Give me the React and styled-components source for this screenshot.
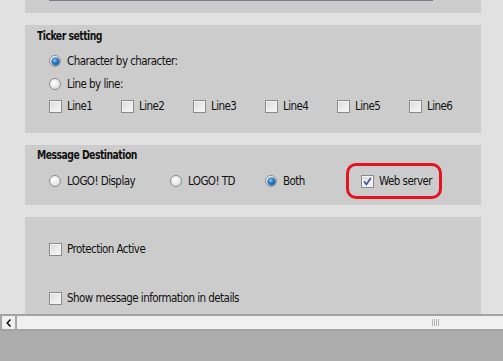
import React from 'react';
import styled, { createGlobalStyle } from 'styled-components';

const GlobalStyle = createGlobalStyle`
  html, body {
    margin: 0;
    padding: 0;
    background: #e1e1e1;
    overflow: hidden;
  }
  body {
    font-family: "Liberation Sans Narrow", "DejaVu Sans Condensed", "Liberation Sans", sans-serif;
    font-size: 11.5px;
    letter-spacing: -0.55px;
    color: #111;
  }
`;

const Page = styled.div`
  width: 503px;
  height: 361px;
  display: flex;
  flex-direction: column;
  background: #adadad;
`;

const Content = styled.div`
  height: 314px;
  background: #e1e1e1;
  padding: 0 22px 0 25px;
  display: flex;
  flex-direction: column;
  gap: 12px;
  overflow: hidden;
`;

const Panel = styled.section`
  flex: none;
  height: ${p => p.h}px;
  background: #cccccc;
  padding: ${p => p.pt || 0}px 0 0 12px;
  box-sizing: border-box;
  display: flex;
  flex-direction: column;
`;

const TopPanel = styled.div`
  flex: none;
  height: 13px;
  background: #cccccc;
  padding-left: 24px;
`;

const InputEdge = styled.div`
  width: 384px;
  height: 1px;
  background: #7a7f87;
`;

const Title = styled.div`
  height: 14px;
  line-height: 14px;
  font-weight: bold;
  font-size: 12px;
  letter-spacing: -0.6px;
  transform: scaleX(0.86);
  transform-origin: left center;
  white-space: nowrap;
`;

const Row = styled.div`
  height: 22px;
  margin-top: ${p => p.mt || 0}px;
  padding-left: 12px;
  display: flex;
  align-items: center;
`;

const Option = styled.label`
  position: relative;
  flex: none;
  width: ${p => (p.w ? p.w + 'px' : 'auto')};
  display: flex;
  align-items: center;
  white-space: nowrap;
  line-height: 14px;
`;

const RadioDot = styled.span`
  flex: none;
  box-sizing: border-box;
  width: 12px;
  height: 12px;
  border-radius: 50%;
  border: 1px solid #8c8c8c;
  background: radial-gradient(circle at 40% 35%, #ffffff 0%, #ececec 45%, #cfcfcf 100%);
  margin-right: 6px;
  display: flex;
  align-items: center;
  justify-content: center;

  &::after {
    content: '';
    display: ${p => (p.checked ? 'block' : 'none')};
    width: 7px;
    height: 7px;
    border-radius: 50%;
    background: radial-gradient(circle at 40% 35%, #8fd4ff 0%, #1f7fcf 40%, #08427f 100%);
    box-shadow: 0 0 0 0.5px #0a3566;
  }
`;

const Box = styled.span`
  flex: none;
  box-sizing: border-box;
  width: 13px;
  height: 13px;
  border: 1px solid #8a8a8a;
  background: linear-gradient(135deg, #d8d8d8 0%, #ececec 55%, #fafafa 100%);
  box-shadow: inset 0 0 0 1px #f4f4f4;
  margin-right: 5px;
  display: flex;
  align-items: center;
  justify-content: center;
`;

const Highlight = styled.span`
  position: absolute;
  left: -15px;
  top: 50%;
  transform: translateY(-50%);
  width: 96px;
  height: 36px;
  box-sizing: border-box;
  border: 3px solid #e3131f;
  border-radius: 10px;
  pointer-events: none;
`;

const ScrollBar = styled.div`
  flex: none;
  height: 17px;
  display: flex;
  background: #f0f0f0;
`;

const ArrowBtn = styled.div`
  flex: none;
  width: 17px;
  box-sizing: border-box;
  border: 2px solid #a4a4a4;
  display: flex;
  align-items: center;
  justify-content: center;
`;

const Track = styled.div`
  flex: 1;
  box-sizing: border-box;
  border-top: 2px solid #a4a4a4;
  border-bottom: 2px solid #a4a4a4;
  padding-left: 415px;
  display: flex;
  align-items: center;
  gap: 1px;
`;

const GripLine = styled.span`
  width: 1px;
  height: 7px;
  background: #b4b4b4;
`;

const Radio = ({ label, checked, w }) => (
  <Option w={w}>
    <RadioDot checked={checked} />
    {label}
  </Option>
);

const Check = ({ label, checked, w, marked }) => (
  <Option w={w}>
    <Box>
      {checked && (
        <svg width="9" height="9" viewBox="0 0 9 9">
          <polyline points="1.2,4.6 3.4,7.4 7.8,1" fill="none" stroke="#3b4ea6" strokeWidth="1.6" />
        </svg>
      )}
    </Box>
    {label}
    {marked && <Highlight />}
  </Option>
);

const lines = ['Line1', 'Line2', 'Line3', 'Line4', 'Line5', 'Line6'];

export default function App() {
  return (
    <Page>
      <GlobalStyle />
      <Content>
        <TopPanel>
          <InputEdge />
        </TopPanel>

        <Panel h={108} pt={4}>
          <Title>Ticker setting</Title>
          <Row mt={7}>
            <Radio label="Character by character:" checked />
          </Row>
          <Row mt={1}>
            <Radio label="Line by line:" />
          </Row>
          <Row>
            {lines.map(l => (
              <Check key={l} label={l} w={72} />
            ))}
          </Row>
        </Panel>

        <Panel h={60} pt={3}>
          <Title>Message Destination</Title>
          <Row mt={8}>
            <Radio label="LOGO! Display" w={121} />
            <Radio label="LOGO! TD" w={95} />
            <Radio label="Both" checked w={96} />
            <Check label="Web server" checked marked />
          </Row>
        </Panel>

        <Panel h={97} pt={21}>
          <Row>
            <Check label="Protection Active" />
          </Row>
          <Row mt={27}>
            <Check label="Show message information in details" />
          </Row>
        </Panel>
      </Content>

      <ScrollBar>
        <ArrowBtn>
          <svg width="6" height="8" viewBox="0 0 6 8">
            <polyline points="4.5,0.5 1.2,4 4.5,7.5" fill="none" stroke="#111" strokeWidth="1.5" />
          </svg>
        </ArrowBtn>
        <Track>
          <GripLine />
          <GripLine />
          <GripLine />
          <GripLine />
        </Track>
      </ScrollBar>
    </Page>
  );
}
